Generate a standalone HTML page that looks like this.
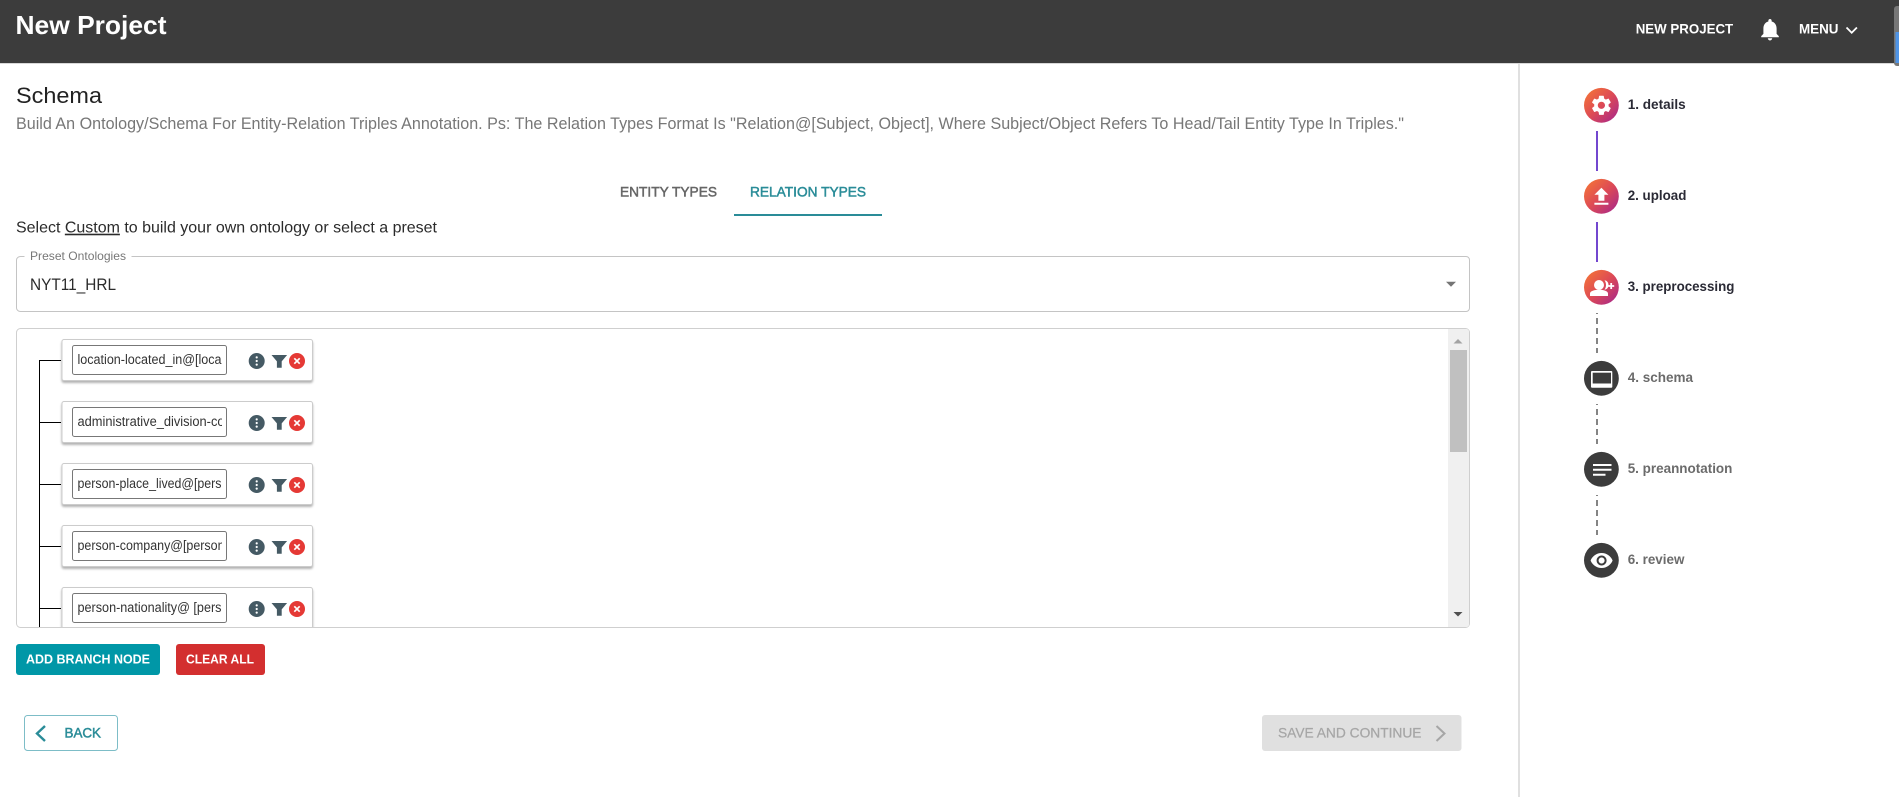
<!DOCTYPE html>
<html lang="en">
<head>
<meta charset="utf-8">
<title>New Project</title>
<style>
html,body{margin:0;padding:0;width:1899px;height:797px;overflow:hidden;background:#fff}
svg{display:block}
text{font-family:"Liberation Sans",Arial,sans-serif;white-space:pre}
.med{stroke-width:.5px}
.lbl{font-size:14px;font-weight:bold}
.in{font-size:13.4px;fill:#333}
</style>
</head>
<body>
<svg xmlns="http://www.w3.org/2000/svg" width="1899" height="797" viewBox="0 0 1899 797">
<defs>
<linearGradient id="g" x1="0.1" y1="0.1" x2="0.9" y2="0.9">
<stop offset="0" stop-color="#f2703a"/><stop offset="0.5" stop-color="#dd4a55"/><stop offset="1" stop-color="#ae2c84"/>
</linearGradient>
<clipPath id="box"><rect x="17" y="329" width="1431" height="298"/></clipPath>
<clipPath id="inp"><rect x="73" y="330" width="149" height="297"/></clipPath>
<g id="acts">
<circle cx="256.7" cy="361" r="8" fill="#455a64"/>
<circle cx="256.7" cy="357.4" r="1.1" fill="#fff"/><circle cx="256.7" cy="361" r="1.1" fill="#fff"/><circle cx="256.7" cy="364.6" r="1.1" fill="#fff"/>
<path d="M271.5 355h15.600l-5.400 6.400v6.400h-4.800v-6.400z" fill="#455a64"/>
<circle cx="297" cy="361" r="8" fill="#e53935"/>
<path d="M294.300 358.300l5.400 5.400m0-5.400l-5.400 5.400" stroke="#fff" stroke-width="1.700" fill="none"/>
</g>
</defs>

<!-- header -->
<rect x="0" y="0" width="1899" height="63" fill="#3c3c3c"/>
<rect x="0" y="63" width="1899" height="1" fill="#d8d8d8"/>
<text x="15.500" y="34" font-size="26" font-weight="bold" fill="#fff" textLength="151" lengthAdjust="spacingAndGlyphs">New Project</text>
<text x="1635.700" y="33.700" font-size="14" font-weight="bold" fill="#fff" textLength="97.500" lengthAdjust="spacingAndGlyphs">NEW PROJECT</text>
<g transform="translate(1756.800 16.300) scale(1.100)"><path fill="#fff" d="M12 22c1.100 0 2-.9 2-2h-4c0 1.100.89 2 2 2zm6-6v-5c0-3.070-1.640-5.640-4.500-6.320V4c0-.83-.67-1.500-1.500-1.500s-1.500.67-1.500 1.500v.68C7.630 5.360 6 7.920 6 11v5l-2 2v1h16v-1l-2-2z"/></g>
<text x="1799" y="33.700" font-size="14" font-weight="bold" fill="#fff" textLength="39.500" lengthAdjust="spacingAndGlyphs">MENU</text>
<path d="M1846.500 27.500l5.200 5.200 5.200-5.200" fill="none" stroke="#fff" stroke-width="1.800"/>
<rect x="1894" y="6" width="8" height="60" rx="3" fill="#777"/>
<rect x="1895.500" y="32" width="6" height="31" fill="#4f94e6"/>

<!-- divider -->
<rect x="1518" y="64" width="2" height="733" fill="#e0e0e0"/>

<!-- headings -->
<text x="16" y="103" font-size="22" fill="#222" textLength="86" lengthAdjust="spacingAndGlyphs">Schema</text>
<text x="16" y="129" font-size="16.500" fill="#777" textLength="1388" lengthAdjust="spacingAndGlyphs">Build An Ontology/Schema For Entity-Relation Triples Annotation. Ps: The Relation Types Format Is "Relation@[Subject, Object], Where Subject/Object Refers To Head/Tail Entity Type In Triples."</text>

<!-- tabs -->
<text x="620" y="196.500" font-size="14" fill="#666" stroke="#666" class="med" textLength="97" lengthAdjust="spacingAndGlyphs">ENTITY TYPES</text>
<text x="750" y="196.500" font-size="14" fill="#2a8c98" stroke="#2a8c98" class="med" textLength="116" lengthAdjust="spacingAndGlyphs">RELATION TYPES</text>
<rect x="734" y="214" width="148" height="2" fill="#2a8c98"/>

<text x="16" y="232.700" font-size="16" fill="#2b2b2b" textLength="421" lengthAdjust="spacingAndGlyphs">Select <tspan text-decoration="underline">Custom</tspan> to build your own ontology or select a preset</text>

<!-- select -->
<path d="M24.500 256.500h-4c-2 0-4 1.500-4 3.500v48c0 2 2 3.500 4 3.500h1445.500c2 0 3.500-1.500 3.500-3.500v-48c0-2-1.500-3.500-3.500-3.500H131.500" fill="none" stroke="#c4c4c4" stroke-width="1"/>
<text x="30" y="260" font-size="12" fill="#777" textLength="96" lengthAdjust="spacingAndGlyphs">Preset Ontologies</text>
<text x="30" y="290" font-size="16.500" fill="#2b2b2b" textLength="86" lengthAdjust="spacingAndGlyphs">NYT11_HRL</text>
<path d="M1446 281.700h10l-5 5z" fill="#757575"/>

<!-- tree box -->
<rect x="16.500" y="328.500" width="1453" height="299" rx="4" fill="#fff" stroke="#cfcfcf"/>
<g clip-path="url(#box)">
<rect x="39" y="360" width="1" height="268" fill="#000"/>
<rect x="39" y="360" width="22" height="1" fill="#000"/>
<rect x="39" y="422" width="22" height="1" fill="#000"/>
<rect x="39" y="484" width="22" height="1" fill="#000"/>
<rect x="39" y="546" width="22" height="1" fill="#000"/>
<rect x="39" y="608" width="22" height="1" fill="#000"/>

<rect x="62" y="339.500" width="250.500" height="41" rx="2" fill="#fff" stroke="#ccc" style="filter:drop-shadow(0 2px 1px rgba(0,0,0,.3))"/>
<rect x="62" y="401.500" width="250.500" height="41" rx="2" fill="#fff" stroke="#ccc" style="filter:drop-shadow(0 2px 1px rgba(0,0,0,.3))"/>
<rect x="62" y="463.500" width="250.500" height="41" rx="2" fill="#fff" stroke="#ccc" style="filter:drop-shadow(0 2px 1px rgba(0,0,0,.3))"/>
<rect x="62" y="525.500" width="250.500" height="41" rx="2" fill="#fff" stroke="#ccc" style="filter:drop-shadow(0 2px 1px rgba(0,0,0,.3))"/>
<rect x="62" y="587.500" width="250.500" height="41" rx="2" fill="#fff" stroke="#ccc" style="filter:drop-shadow(0 2px 1px rgba(0,0,0,.3))"/>

<rect x="72.500" y="345.500" width="154" height="29" rx="2" fill="#fff" stroke="#777"/>
<rect x="72.500" y="407.500" width="154" height="29" rx="2" fill="#fff" stroke="#777"/>
<rect x="72.500" y="469.500" width="154" height="29" rx="2" fill="#fff" stroke="#777"/>
<rect x="72.500" y="531.500" width="154" height="29" rx="2" fill="#fff" stroke="#777"/>
<rect x="72.500" y="593.500" width="154" height="29" rx="2" fill="#fff" stroke="#777"/>

<g clip-path="url(#inp)">
<text x="77.500" y="364" class="in" textLength="144" lengthAdjust="spacingAndGlyphs">location-located_in@[loca</text>
<text x="77.500" y="426" class="in" textLength="147" lengthAdjust="spacingAndGlyphs">administrative_division-co</text>
<text x="77.500" y="488" class="in" textLength="144" lengthAdjust="spacingAndGlyphs">person-place_lived@[pers</text>
<text x="77.500" y="550" class="in" textLength="147" lengthAdjust="spacingAndGlyphs">person-company@[person</text>
<text x="77.500" y="612" class="in" textLength="144" lengthAdjust="spacingAndGlyphs">person-nationality@ [pers</text>
</g>

<use href="#acts"/>
<use href="#acts" y="62"/>
<use href="#acts" y="124"/>
<use href="#acts" y="186"/>
<use href="#acts" y="248"/>
</g>

<!-- scrollbar -->
<path d="M1448 329h18c2 0 3 1 3 3v292c0 2-1 3-3 3h-18z" fill="#f0f0f0"/>
<rect x="1450" y="350" width="17" height="102" fill="#c0c0c0"/>
<path d="M1453.500 343.500h9l-4.500-4.500z" fill="#a3a3a3"/>
<path d="M1453.500 612h9l-4.500 4.500z" fill="#505050"/>

<!-- buttons -->
<rect x="16" y="644" width="144" height="31" rx="3" fill="#0097a7"/>
<text x="26" y="663.300" font-size="12.500" font-weight="bold" fill="#fff" textLength="124" lengthAdjust="spacingAndGlyphs">ADD BRANCH NODE</text>
<rect x="176" y="644" width="89" height="31" rx="3" fill="#d32f2f"/>
<text x="186" y="663.300" font-size="12.500" font-weight="bold" fill="#fff" textLength="68" lengthAdjust="spacingAndGlyphs">CLEAR ALL</text>

<rect x="24.500" y="715.500" width="93" height="35" rx="3" fill="#fff" stroke="#7dbdc7"/>
<path d="M45 726l-8 7.500 8 7.500" fill="none" stroke="#2a8c98" stroke-width="2.400"/>
<text x="64.500" y="737.300" font-size="14" fill="#2a8c98" stroke="#2a8c98" class="med" textLength="36.500" lengthAdjust="spacingAndGlyphs">BACK</text>

<rect x="1262" y="715" width="199.500" height="36" rx="3" fill="#e0e0e0"/>
<text x="1278" y="737.300" font-size="14" fill="#a6a6a6" stroke="#a6a6a6" stroke-width=".25" textLength="143.500" lengthAdjust="spacingAndGlyphs">SAVE AND CONTINUE</text>
<path d="M1436.500 726l8 7.500-8 7.500" fill="none" stroke="#a6a6a6" stroke-width="2"/>

<!-- stepper -->
<rect x="1596" y="131" width="2" height="40" fill="#7347cf"/>
<rect x="1596" y="222" width="2" height="40" fill="#7347cf"/>
<path d="M1597 313v40M1597 404v40M1597 495v40" fill="none" stroke="#777" stroke-width="1.800" stroke-dasharray="6 4" stroke-dashoffset="5"/>

<circle cx="1601.400" cy="105.300" r="17.400" fill="url(#g)"/>
<g transform="translate(1589.400 93.300)"><path fill="#fff" d="M19.140 12.940c.04-.3.06-.61.06-.94 0-.32-.02-.64-.07-.94l2.030-1.580c.18-.14.23-.41.12-.61l-1.920-3.320c-.12-.22-.37-.29-.59-.22l-2.390.96c-.5-.38-1.030-.7-1.620-.94l-.36-2.540c-.04-.24-.24-.41-.48-.41h-3.840c-.24 0-.43.17-.47.41l-.36 2.540c-.59.24-1.130.57-1.620.94l-2.390-.96c-.22-.08-.47 0-.59.22L2.740 8.870c-.12.21-.08.47.12.61l2.030 1.580c-.05.3-.09.63-.09.94s.02.64.07.94l-2.030 1.580c-.18.14-.23.41-.12.61l1.920 3.320c.12.22.37.29.59.22l2.390-.96c.5.38 1.030.7 1.620.94l.36 2.540c.05.24.24.41.48.41h3.840c.24 0 .44-.17.47-.41l.36-2.540c.59-.24 1.130-.56 1.620-.94l2.390.96c.22.08.47 0 .59-.22l1.920-3.320c.12-.22.07-.47-.12-.61l-2.010-1.580zM12 15.600c-1.980 0-3.600-1.620-3.600-3.600s1.620-3.600 3.600-3.600 3.600 1.620 3.600 3.600-1.620 3.600-3.600 3.600z"/></g>

<circle cx="1601.400" cy="196.300" r="17.400" fill="url(#g)"/>
<g transform="translate(1589.400 184.800)"><path fill="#fff" d="M9 16h6v-6h4l-7-7-7 7h4zm-4 2h14v2H5z"/></g>

<circle cx="1601.400" cy="287.300" r="17.400" fill="url(#g)"/>
<circle cx="1599" cy="285" r="5" fill="#fff"/>
<path d="M1590 296v-2.500c0-2.500 4.500-3.800 9-3.800s9 1.300 9 3.800v2.500z" fill="#fff"/>
<path d="M1604.500 280.200c2.600.3 4 2.300 4 4.800s-1.400 4.300-4 4.700c1-1.400 1.500-3 1.500-4.700s-.5-3.400-1.500-4.800z" fill="#fff"/>
<path d="M1611.200 283v6M1608.200 286h6" stroke="#fff" stroke-width="1.800" fill="none"/>

<circle cx="1601.400" cy="378.300" r="17.400" fill="#3c3c3c"/>
<rect x="1591" y="371" width="21.300" height="16.700" rx="1" fill="#fff"/>
<rect x="1592.700" y="372.700" width="18.300" height="10.800" fill="#3c3c3c"/>

<circle cx="1601.400" cy="469.300" r="17.400" fill="#3c3c3c"/>
<path d="M1593 465h18.500M1593 469.700h18.500M1593 474.700h12.500" stroke="#fff" stroke-width="2" fill="none"/>

<circle cx="1601.400" cy="560.300" r="17.400" fill="#3c3c3c"/>
<g transform="translate(1589.600 548.500)"><path fill="#fff" d="M12 4.500C7 4.500 2.730 7.610 1 12c1.730 4.390 6 7.500 11 7.500s9.270-3.110 11-7.500c-1.730-4.390-6-7.500-11-7.500zM12 17c-2.760 0-5-2.240-5-5s2.240-5 5-5 5 2.240 5 5-2.240 5-5 5zm0-8c-1.660 0-3 1.340-3 3s1.340 3 3 3 3-1.340 3-3-1.340-3-3-3z"/></g>

<text x="1627.700" y="109" class="lbl" fill="#2a2a35" textLength="58" lengthAdjust="spacingAndGlyphs">1. details</text>
<text x="1627.700" y="200" class="lbl" fill="#2a2a35" textLength="58.700" lengthAdjust="spacingAndGlyphs">2. upload</text>
<text x="1627.700" y="291" class="lbl" fill="#2a2a35" textLength="106.700" lengthAdjust="spacingAndGlyphs">3. preprocessing</text>
<text x="1627.700" y="382" class="lbl" fill="#6b6b6b" textLength="65.300" lengthAdjust="spacingAndGlyphs">4. schema</text>
<text x="1627.700" y="473" class="lbl" fill="#6b6b6b" textLength="104.700" lengthAdjust="spacingAndGlyphs">5. preannotation</text>
<text x="1627.700" y="564" class="lbl" fill="#6b6b6b" textLength="56.700" lengthAdjust="spacingAndGlyphs">6. review</text>
</svg>
</body>
</html>
